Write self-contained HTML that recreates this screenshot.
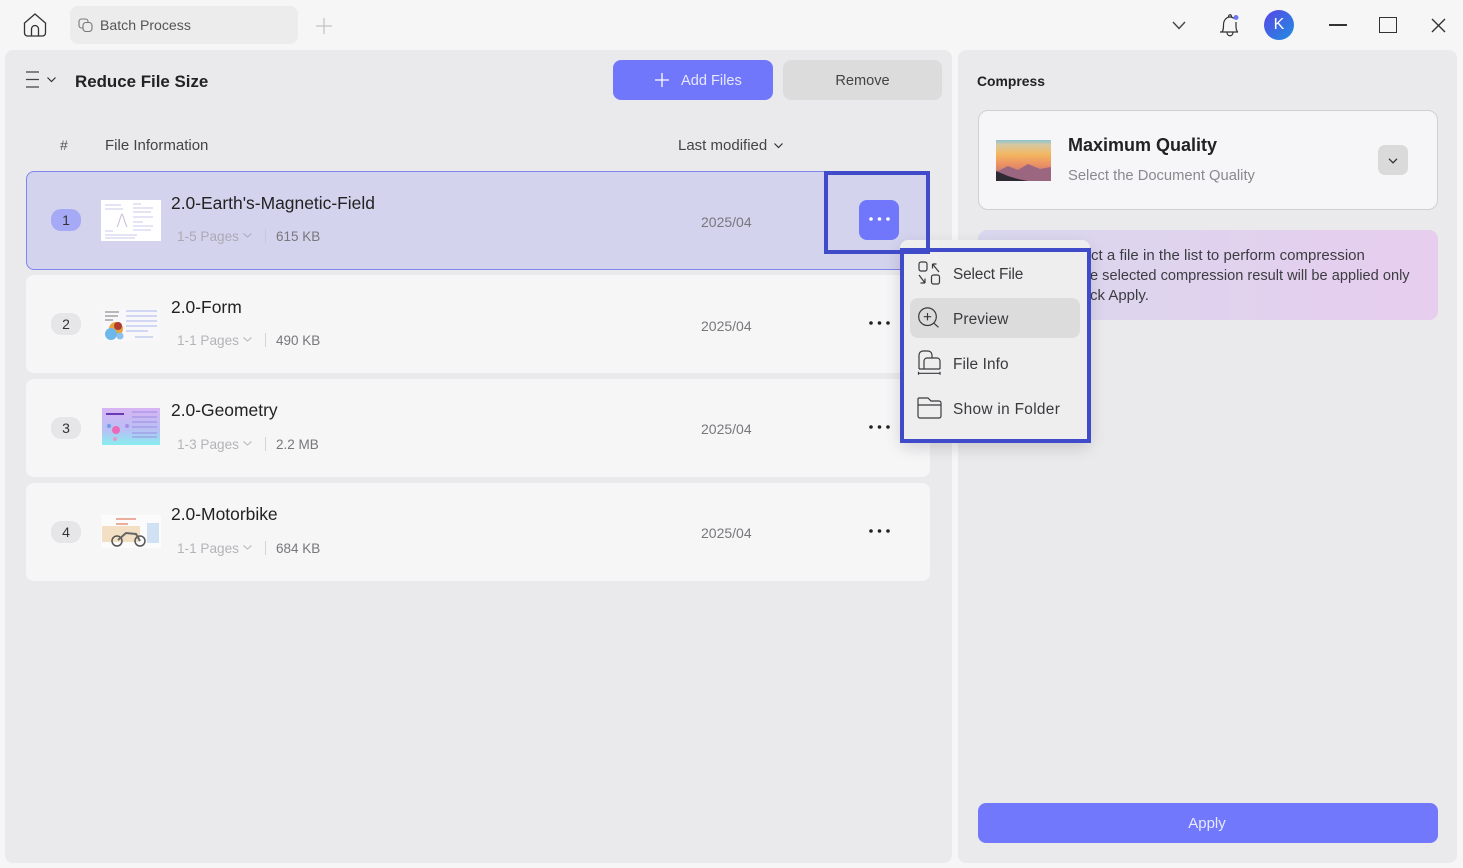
<!DOCTYPE html>
<html><head><meta charset="utf-8"><style>
*{box-sizing:border-box}
html,body{margin:0;padding:0;width:1463px;height:868px;overflow:hidden;background:#f6f6f7;font-family:"Liberation Sans",sans-serif}
.a{position:absolute}
.t{position:absolute;white-space:nowrap;line-height:20px}
.row{position:absolute;left:26px;width:904px;height:98px;background:#f6f6f7;border-radius:8px}
.num{position:absolute;left:51px;width:30px;height:22px;border-radius:10px;background:#e6e6e8;color:#333;font-size:14px;line-height:22px;text-align:center}
.name{font-size:17.45px;color:#222}
.pg{font-size:13.6px;color:#b4b4b8}
.sz{font-size:13.5px;color:#77777c}
.dt{font-size:14px;color:#77777c}
.sep{position:absolute;left:265px;width:1px;height:14px;background:#d4d4d6}
.dots{position:absolute;left:869px;width:21px;height:4px}
.mi{font-size:15.4px;color:#3a3a3e;letter-spacing:.1px}
svg{position:absolute;overflow:visible}
</style></head><body>
<svg style="left:22px;top:13px" width="26" height="24" viewBox="0 0 26 24" fill="none" stroke="#333" stroke-width="1.3"><path d="M2 10.500 13 1l11 9.500M2.500 10v10a3 3 0 0 0 3 3h15a3 3 0 0 0 3-3V10M9.500 23v-7a3.500 3.500 0 0 1 7 0v7"/></svg>
<div class="a" style="left:70px;top:6px;width:228px;height:38px;background:#ececed;border-radius:8px"></div>
<svg style="left:78px;top:18px" width="15" height="15" viewBox="0 0 15 15" fill="none" stroke="#777" stroke-width="1.100"><rect x="1" y="1" width="9" height="9" rx="2.500"/><rect x="5" y="4.500" width="9" height="9" rx="3" fill="#ececed"/></svg>
<div class="t" style="left:100px;top:15px;font-size:14.100px;color:#555">Batch Process</div>
<svg style="left:316px;top:18px" width="16" height="16" stroke="#c4c4c6" stroke-width="1.300"><path d="M8 0v16M0 8h16"/></svg>

<svg style="left:1172px;top:21px" width="14" height="9" fill="none" stroke="#444" stroke-width="1.400"><path d="M1 1l6 6.500L13 1"/></svg>
<svg style="left:1219px;top:12px" width="22" height="25" viewBox="0 0 22 25" fill="none" stroke="#333" stroke-width="1.200"><path d="M1 20h18M3 20c1.500-2 1.500-4 1.500-7 0-5 3-8 6.500-8 2 0 3 .5 4 1.500M17 10v5c0 2 .5 3.500 1.500 5M8 20c0 5 6 5 6 0M9.500 5c0-3 3-3 3 0"/><circle cx="17" cy="5.500" r="2.500" fill="#6d78f0" stroke="none"/></svg>
<div class="a" style="left:1264px;top:10px;width:30px;height:30px;border-radius:50%;background:linear-gradient(135deg,#5a45e6,#1f8fe0);color:#fff;font-size:16px;line-height:30px;text-align:center">K</div>
<div class="a" style="left:1329px;top:24px;width:18px;height:1.500px;background:#333"></div>
<div class="a" style="left:1379px;top:17px;width:18px;height:16px;border:1.500px solid #333"></div>
<svg style="left:1431px;top:18px" width="15" height="15" stroke="#333" stroke-width="1.400"><path d="M1 1l13 13M14 1 1 14"/></svg>

<div class="a" style="left:5px;top:50px;width:947px;height:813px;background:#eaeaec;border-radius:8px"></div>
<div class="a" style="left:958px;top:50px;width:499px;height:813px;background:#eaeaec;border-radius:8px"></div>

<svg style="left:26px;top:71px" width="14" height="17" stroke="#444" stroke-width="1.200"><path d="M0 1h13M0 8.500h13M0 16h13"/></svg>
<svg style="left:47px;top:77px" width="9" height="6" fill="none" stroke="#333" stroke-width="1.200"><path d="M.5.500 4.500 4.500 8.500.500"/></svg>
<div class="t" style="left:75px;top:72px;font-size:16.900px;font-weight:700;color:#222;line-height:19px">Reduce File Size</div>

<div class="a" style="left:613px;top:60px;width:160px;height:40px;border-radius:8px;background:#7077fb"></div>
<svg style="left:655px;top:73px" width="14" height="14" stroke="#fff" stroke-width="1.300"><path d="M7 0v14M0 7h14"/></svg>
<div class="t" style="left:681px;top:71px;font-size:14.600px;color:#e6e8ff">Add Files</div>
<div class="a" style="left:783px;top:60px;width:159px;height:40px;border-radius:8px;background:#dcdcdd;color:#444;font-size:14.600px;line-height:42px;text-align:center">Remove</div>

<div class="t" style="left:60px;top:135px;font-size:14px;color:#555">#</div>
<div class="t" style="left:105px;top:136px;font-size:15px;color:#444">File Information</div>
<div class="t" style="left:678px;top:136px;font-size:15px;color:#444">Last modified</div>
<svg style="left:774px;top:143px" width="9" height="6" fill="none" stroke="#333" stroke-width="1.200"><path d="M.5.500 4.500 4.500 8.500.500"/></svg>

<div class="row" style="top:171px;height:99px;background:#d3d3ee;border:1.500px solid #7f85ee"></div>
<div class="row" style="top:275px"></div>
<div class="row" style="top:379px"></div>
<div class="row" style="top:483px"></div>

<div class="num" style="top:209px;background:#a6a9f5">1</div>
<div class="num" style="top:313px">2</div>
<div class="num" style="top:417px">3</div>
<div class="num" style="top:521px">4</div>

<svg style="left:101px;top:200px" width="60" height="41" viewBox="0 0 60 41"><rect width="60" height="41" fill="#fff"/><g stroke="#c8c8ea" stroke-width="1"><path d="M4 5h16M4 9h18M32 4h8M32 8h20M32 12h18M32 17h20M32 22h10M32 26h20M32 30h18M4 31h8M4 35h32M4 38h30"/></g><path d="M16 27c2-3 3-10 5-13 2 3 3 10 5 13" fill="none" stroke="#c9b8d8"/></svg>
<svg style="left:103px;top:309px" width="57" height="32" viewBox="0 0 57 32"><rect width="57" height="32" fill="#f8f8fb"/><g stroke="#aab4e8" stroke-width="1"><path d="M23 2h31M23 7h31M23 12h31M23 17h31M23 22h22M32 28h18"/></g><path d="M2 3h14M2 7h13M2 11h8" stroke="#777"/><circle cx="13" cy="20" r="7" fill="#e8a43c"/><circle cx="8" cy="25" r="6" fill="#6db7ea"/><circle cx="15" cy="17" r="4" fill="#b03c2e"/><circle cx="17" cy="27" r="3.500" fill="#8ac0f0"/></svg>
<svg style="left:102px;top:408px" width="58" height="37" viewBox="0 0 58 37"><defs><linearGradient id="g" x1="0" y1="0" x2="0" y2="1"><stop offset="0" stop-color="#d8b4f4"/><stop offset=".6" stop-color="#b8c0f4"/><stop offset="1" stop-color="#88eef0"/></linearGradient></defs><rect width="58" height="37" fill="url(#g)"/><path d="M4 6h18" stroke="#6a3bb5" stroke-width="2"/><g stroke="#9a8ce0"><path d="M30 4h25M30 9h25M30 14h25M30 19h25M30 25h25M30 29h25"/></g><circle cx="14" cy="22" r="4" fill="#e86ab8"/><circle cx="7" cy="18" r="2" fill="#6aa0e8"/><circle cx="25" cy="18" r="2" fill="#a88ce8"/><circle cx="13" cy="31" r="2" fill="#e898c8"/></svg>
<svg style="left:101px;top:515px" width="60" height="33" viewBox="0 0 60 33"><rect width="60" height="33" fill="#fbfbfb"/><path d="M15 4h20M15 9h12" stroke="#d8623c"/><rect x="1" y="11" width="38" height="16" fill="#f2dfc4"/><ellipse cx="16" cy="26" rx="5" ry="5" fill="none" stroke="#555" stroke-width="1.500"/><ellipse cx="39" cy="26" rx="5" ry="5" fill="none" stroke="#555" stroke-width="1.500"/><path d="M17 25l8-7 10 1 4 7" stroke="#666" fill="none" stroke-width="2"/><rect x="46" y="8" width="12" height="20" fill="#cfe1f2"/></svg>

<div class="t name" style="left:171px;top:193px">2.0-Earth's-Magnetic-Field</div>
<div class="t name" style="left:171px;top:297px">2.0-Form</div>
<div class="t name" style="left:171px;top:400px">2.0-Geometry</div>
<div class="t name" style="left:171px;top:504px">2.0-Motorbike</div>

<div class="t pg" style="left:177px;top:227px;color:#aaaab4">1-5 Pages</div><svg style="left:243px;top:233px" width="9" height="5" fill="none" stroke="#aaaab4"><path d="M.5.500 4.500 4 8.500.500"/></svg><div class="sep" style="top:229px;background:#c8c8dc"></div><div class="t sz" style="left:276px;top:227px">615 KB</div>
<div class="t pg" style="left:177px;top:331px">1-1 Pages</div><svg style="left:243px;top:337px" width="9" height="5" fill="none" stroke="#b4b4b8"><path d="M.5.500 4.500 4 8.500.500"/></svg><div class="sep" style="top:333px"></div><div class="t sz" style="left:276px;top:331px">490 KB</div>
<div class="t pg" style="left:177px;top:435px">1-3 Pages</div><svg style="left:243px;top:441px" width="9" height="5" fill="none" stroke="#b4b4b8"><path d="M.5.500 4.500 4 8.500.500"/></svg><div class="sep" style="top:437px"></div><div class="t sz" style="left:276px;top:435px">2.2 MB</div>
<div class="t pg" style="left:177px;top:539px">1-1 Pages</div><svg style="left:243px;top:545px" width="9" height="5" fill="none" stroke="#b4b4b8"><path d="M.5.500 4.500 4 8.500.500"/></svg><div class="sep" style="top:541px"></div><div class="t sz" style="left:276px;top:539px">684 KB</div>

<div class="t dt" style="left:701px;top:212px">2025/04</div>
<div class="t dt" style="left:701px;top:316px">2025/04</div>
<div class="t dt" style="left:701px;top:419px">2025/04</div>
<div class="t dt" style="left:701px;top:523px">2025/04</div>

<div class="a" style="left:859px;top:200px;width:40px;height:40px;border-radius:8px;background:#7077fb"></div>
<svg class="dots" style="top:217px" width="21" height="4"><g fill="#fff"><circle cx="2" cy="2" r="1.800"/><circle cx="10.500" cy="2" r="1.800"/><circle cx="19" cy="2" r="1.800"/></g></svg>
<svg class="dots" style="top:321px" width="21" height="4"><g fill="#222"><circle cx="2" cy="2" r="1.800"/><circle cx="10.500" cy="2" r="1.800"/><circle cx="19" cy="2" r="1.800"/></g></svg>
<svg class="dots" style="top:425px" width="21" height="4"><g fill="#222"><circle cx="2" cy="2" r="1.800"/><circle cx="10.500" cy="2" r="1.800"/><circle cx="19" cy="2" r="1.800"/></g></svg>
<svg class="dots" style="top:529px" width="21" height="4"><g fill="#222"><circle cx="2" cy="2" r="1.800"/><circle cx="10.500" cy="2" r="1.800"/><circle cx="19" cy="2" r="1.800"/></g></svg>

<div class="t" style="left:977px;top:71px;font-size:13.900px;font-weight:700;color:#222">Compress</div>
<div class="a" style="left:978px;top:110px;width:460px;height:100px;background:#f6f6f8;border:1.200px solid #d0d0d2;border-radius:10px"></div>
<svg style="left:996px;top:140px" width="55" height="41" viewBox="0 0 55 41"><defs><linearGradient id="s" x1="0" y1="0" x2="0" y2="1"><stop offset="0" stop-color="#8fc4d0"/><stop offset=".12" stop-color="#d8c8a0"/><stop offset=".35" stop-color="#f3b760"/><stop offset=".6" stop-color="#ec9064"/><stop offset="1" stop-color="#a06a80"/></linearGradient></defs><rect width="55" height="41" fill="url(#s)"/><path d="M0 32 12 26l10 4 10-6 12 5 11-2v14H0z" fill="#9a6680"/><path d="M0 31l12 5 10 3 10 2H0z" fill="#2e2a34"/></svg>
<div class="t" style="left:1068px;top:135px;font-size:18px;font-weight:700;color:#222">Maximum Quality</div>
<div class="t" style="left:1068px;top:166px;font-size:14.750px;color:#8a8a8e">Select the Document Quality</div>
<div class="a" style="left:1378px;top:145px;width:30px;height:30px;border-radius:7px;background:#dadadb"></div>
<svg style="left:1388px;top:158px" width="10" height="6" fill="none" stroke="#333" stroke-width="1.300"><path d="M1 .8 5 4.800 9 .8"/></svg>

<div class="a" style="left:978px;top:230px;width:460px;height:90px;border-radius:9px;background:linear-gradient(90deg,#d9d8ee,#e7cdee)"></div>
<div class="t" style="left:1091px;top:246px;font-size:15px;color:#3c3c42;letter-spacing:.03px">ct a file in the list to perform compression</div>
<div class="t" style="left:1090px;top:266px;font-size:14.600px;color:#3c3c42">e selected compression result will be applied only</div>
<div class="t" style="left:1090px;top:286px;font-size:15px;color:#3c3c42">ck Apply.</div>

<div class="a" style="left:978px;top:803px;width:460px;height:40px;border-radius:8px;background:#7178fc;color:#e8eaff;font-size:15px;line-height:42px;text-align:center;padding-right:2px">Apply</div>

<div class="a" style="left:900px;top:240px;width:190px;height:202px;background:#eeeeef;border-radius:8px;box-shadow:0 6px 16px rgba(0,0,0,.14)"></div>
<div class="a" style="left:824px;top:171px;width:106px;height:83px;border:4.500px solid #3f4bc8"></div>
<div class="a" style="left:900px;top:248px;width:191px;height:195px;border:4.500px solid #3f4bc8"></div>
<div class="a" style="left:910px;top:298px;width:170px;height:40px;border-radius:8px;background:#dcdcdd"></div>

<svg style="left:918px;top:261px" width="23" height="24" viewBox="0 0 23 24" fill="none" stroke="#3a3a3e" stroke-width="1.200"><rect x="1" y="1" width="8" height="9" rx="2"/><rect x="13.500" y="14" width="8" height="9" rx="2"/><path d="M21 11 14.500 3M14.500 3h4M14.500 3v4.500M1 14l6 8M7 22v-4.500M7 22H2.500"/></svg>
<svg style="left:918px;top:307px" width="23" height="22" viewBox="0 0 23 22" fill="none" stroke="#3a3a3e" stroke-width="1.200"><circle cx="9.500" cy="9.700" r="8.800"/><path d="M16 16.300l4.500 4M9.500 6v7.400M5.800 9.700h7.400"/></svg>
<svg style="left:918px;top:350px" width="23" height="26" viewBox="0 0 23 26" fill="none" stroke="#3a3a3e" stroke-width="1.200"><path d="M1 19V5a4 4 0 0 1 4-4h5a4 4 0 0 1 4 4v3"/><path d="M1 19h21M6 19v-8a3 3 0 0 1 3-3h10a3 3 0 0 1 3 3v8"/><path d="M.5 23.300h21.500M.5 21.800v3M22 21.800v3"/></svg>
<svg style="left:917px;top:397px" width="25" height="22" viewBox="0 0 25 22" fill="none" stroke="#3a3a3e" stroke-width="1.200"><path d="M2 1h9l3 3h8a2 2 0 0 1 2 2v13a2 2 0 0 1-2 2H3a2 2 0 0 1-2-2V2a1 1 0 0 1 1-1zM1 8h23"/></svg>

<div class="t mi" style="left:953px;top:264px;letter-spacing:-.15px;line-height:21px">Select File</div>
<div class="t mi" style="left:953px;top:309px;line-height:21px">Preview</div>
<div class="t mi" style="left:953px;top:354px;line-height:21px">File Info</div>
<div class="t mi" style="left:953px;top:399px;line-height:21px;letter-spacing:.32px">Show in Folder</div>
</body></html>
